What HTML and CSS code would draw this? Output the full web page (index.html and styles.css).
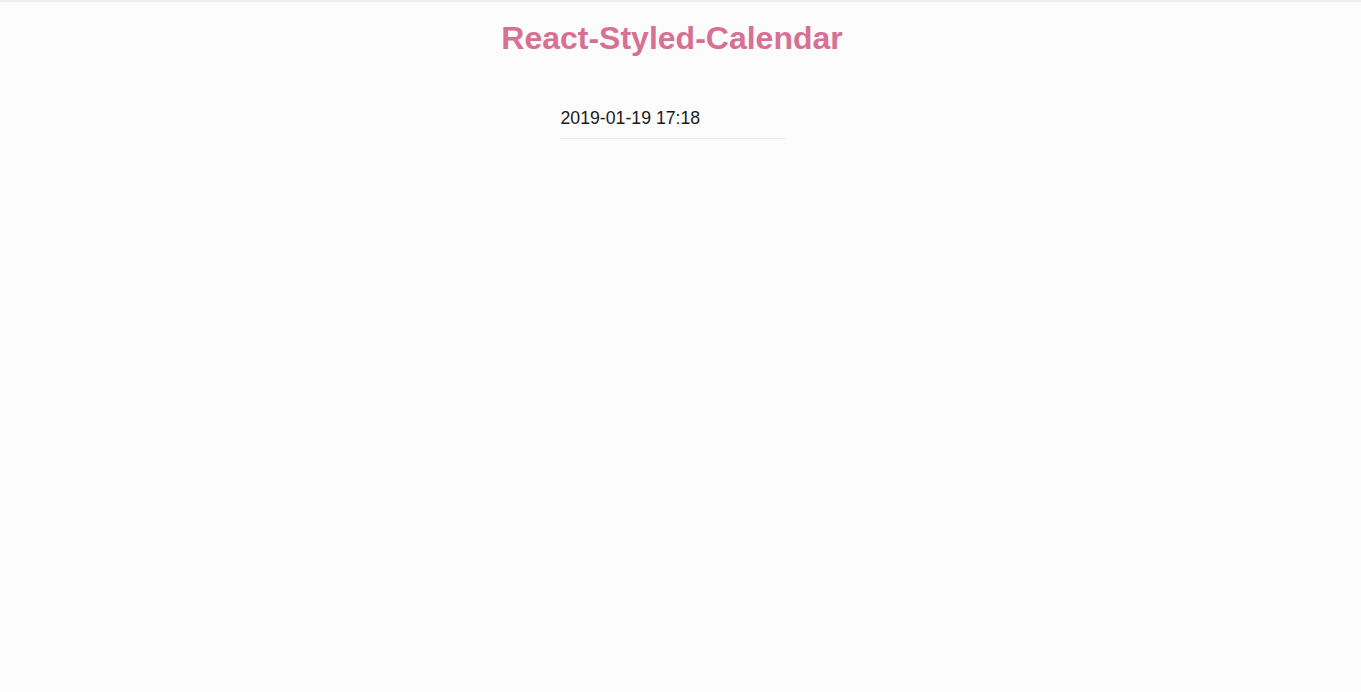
FILE: index.html
```html
<!DOCTYPE html>
<html>
<head>
<meta charset="utf-8">
<link rel="stylesheet" href="styles.css">
</head>
<body>
<div class="app">
  <h1 class="title">React-Styled-Calendar</h1>
  <div class="picker">
    <input class="date-input" type="text" value="2019-01-19 17:18" readonly>
  </div>
</div>
</body>
</html>
```

FILE: styles.css
```css
html, body {
  margin: 0;
  padding: 0;
  background: #fcfcfc;
  height: 100%;
}
body {
  border-top: 2px solid #efefef;
  box-sizing: border-box;
  font-family: "Liberation Sans", Arial, sans-serif;
}
.app {
  width: 1344px;
  display: flex;
  flex-direction: column;
  align-items: center;
}
.title {
  margin: 17px 0 0;
  font-size: 32px;
  line-height: 38px;
  font-weight: bold;
  color: #d87093;
}
.picker {
  margin-top: 48px;
  width: 225px;
}
.date-input {
  display: block;
  box-sizing: border-box;
  width: 100%;
  border: none;
  border-bottom: 1px solid #ebebeb;
  background: transparent;
  outline: none;
  padding: 3px 0 9px 1px;
  font-family: "Liberation Sans", Arial, sans-serif;
  font-size: 17.7px;
  line-height: 21px;
  color: #1a1a1a;
}
```
